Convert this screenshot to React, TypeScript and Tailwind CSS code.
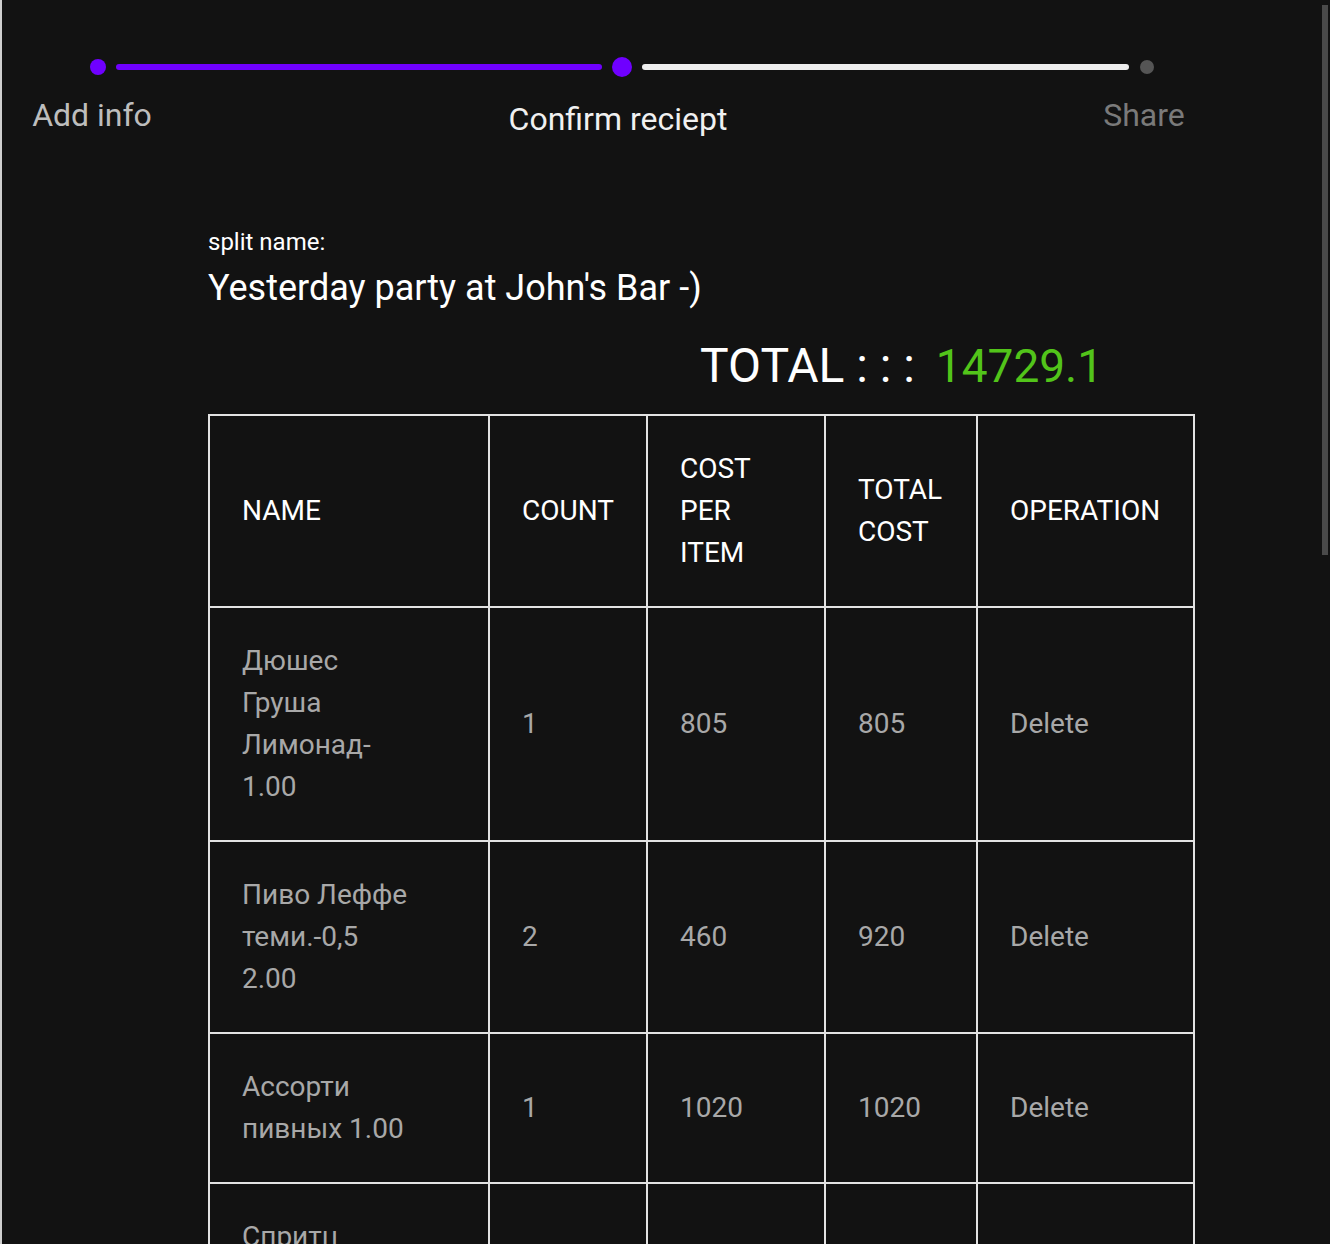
import React from "react";

interface Item {
  name: string;
  count: number;
  cost: number;
}

const items: Item[] = [
  { name: "Дюшес Груша Лимонад-\u200B1.00", count: 1, cost: 805 },
  { name: "Пиво Леффе теми.-0,5 2.00", count: 2, cost: 460 },
  { name: "Ассорти пивных 1.00", count: 1, cost: 1020 },
  { name: "Спритц Апероль 1.00", count: 2, cost: 650 },
  { name: "Бургер Классик 1.00", count: 3, cost: 890 },
];

const Stepper = () => {
  return (
    <div>
      <div className="mt-[57px] flex h-[20px] items-center pl-[88px]">
        <div className="h-4 w-4 rounded-full bg-[#6f00ff]"></div>
        <div className="ml-[10px] h-[6px] w-[486px] rounded-full bg-[#6f00ff]"></div>
        <div className="ml-[10px] h-5 w-5 rounded-full bg-[#6f00ff]"></div>
        <div className="ml-[10px] h-[6px] w-[487px] rounded-full bg-[#eeeeee]"></div>
        <div className="ml-[11px] h-[14px] w-[14px] rounded-full bg-[#555555]"></div>
      </div>
      <div className="mt-[22px] flex items-start gap-[366px] pl-[10px] text-[32px] leading-[32px]">
        <div className="flex w-[160px] justify-center">
          <span className="whitespace-nowrap text-[#bdbdbd]">Add info</span>
        </div>
        <div className="mt-[4px] flex w-[160px] justify-center">
          <span className="whitespace-nowrap text-[#f0f0f0]">Confirm reciept</span>
        </div>
        <div className="flex w-[160px] justify-center">
          <span className="whitespace-nowrap text-[#7a7a7a]">Share</span>
        </div>
      </div>
    </div>
  );
};

const Cell = ({ children, head }: { children: React.ReactNode; head?: boolean }) => (
  <td
    className={`border-r-2 border-b-2 border-[#e2e2e2] p-8 align-middle text-[28px] leading-[42px] ${
      head ? "text-white" : "text-[#a8a8a8]"
    }`}
  >
    {children}
  </td>
);

const App = () => {
  const total = 14729.1;

  return (
    <div
      className="relative h-[1244px] w-full overflow-hidden border-l-2 border-[#cfcfcf] bg-[#121212]"
      style={{ fontFamily: "Roboto, 'Noto Sans', sans-serif" }}
    >
      <Stepper />

      <div className="ml-[206px] mt-[95px] w-[987px]">
        <p className="text-[24px] leading-[24px] text-white">split name:</p>
        <h1 className="mt-[16px] text-[36px] leading-[36px] text-white">
          Yesterday party at John's Bar -)
        </h1>
        <div className="ml-[492px] mt-[36px] text-[48px] leading-[48px] text-white">
          TOTAL : : : <span className="ml-[9px] text-[46px] text-[#52c41a]">{total}</span>
        </div>

        <table className="mt-[24px] w-[987px] table-fixed border-separate border-spacing-0 border-l-2 border-t-2 border-[#e2e2e2]">
          <colgroup>
            <col className="w-[280px]" />
            <col className="w-[158px]" />
            <col className="w-[178px]" />
            <col className="w-[152px]" />
            <col className="w-[217px]" />
          </colgroup>
          <thead>
            <tr>
              <Cell head>NAME</Cell>
              <Cell head>COUNT</Cell>
              <Cell head>COST PER ITEM</Cell>
              <Cell head>TOTAL COST</Cell>
              <Cell head>OPERATION</Cell>
            </tr>
          </thead>
          <tbody>
            {items.map((item, i) => (
              <tr key={i}>
                <Cell>
                  <div className="w-[170px]">{item.name}</div>
                </Cell>
                <Cell>{item.count}</Cell>
                <Cell>{item.cost}</Cell>
                <Cell>{item.cost * item.count}</Cell>
                <Cell>Delete</Cell>
              </tr>
            ))}
          </tbody>
        </table>
      </div>

      <div className="absolute right-[2px] top-[5px] h-[550px] w-[6px] bg-[#4a4a4a]"></div>
    </div>
  );
};

export default App;
